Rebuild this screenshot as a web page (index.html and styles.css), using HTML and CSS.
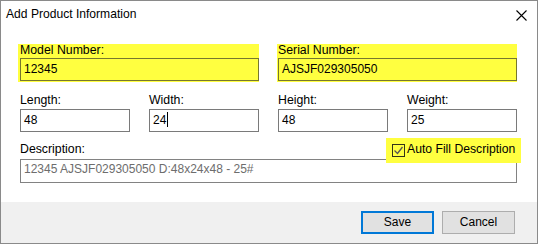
FILE: index.html
```html
<!DOCTYPE html>
<html>
<head>
<meta charset="utf-8">
<link rel="stylesheet" href="styles.css">
</head>
<body>
<div class="dialog">
  <div class="titlebar">
    <span class="title">Add Product Information</span>
    <svg class="close" width="11" height="11" viewBox="0 0 11 11"><path d="M0.5 0.5L10.5 10.5M10.5 0.5L0.5 10.5" stroke="#000" stroke-width="1.1" fill="none"/></svg>
  </div>
  <div class="content">
    <div class="row1">
      <div class="hl group model">
        <div class="label">Model Number:</div>
        <div class="input hl-input">12345</div>
      </div>
      <div class="hl group serial">
        <div class="label">Serial Number:</div>
        <div class="input hl-input">AJSJF029305050</div>
      </div>
    </div>
    <div class="row2">
      <div class="field">
        <div class="label">Length:</div>
        <div class="input">48</div>
      </div>
      <div class="field">
        <div class="label">Width:</div>
        <div class="input">24<span class="caret"></span></div>
      </div>
      <div class="field">
        <div class="label">Height:</div>
        <div class="input">48</div>
      </div>
      <div class="field">
        <div class="label">Weight:</div>
        <div class="input">25</div>
      </div>
    </div>
    <div class="row3">
      <div class="row3-head">
        <div class="label desc-label">Description:</div>
        <div class="hl autofill">
          <span class="checkbox"><svg width="11" height="11" viewBox="0 0 11 11"><path d="M1.5 5.5L4.5 8.5L9.5 2" stroke="#555" stroke-width="1.3" fill="none"/></svg></span>
          <span class="autofill-text">Auto Fill Description</span>
        </div>
      </div>
      <div class="input desc">12345 AJSJF029305050 D:48x24x48 - 25#</div>
    </div>
  </div>
  <div class="footer">
    <div class="btn default">Save</div>
    <div class="btn">Cancel</div>
  </div>
</div>
</body>
</html>
```
FILE: styles.css
```css
html, body {
  margin: 0;
  padding: 0;
  background: #fff;
}
.dialog {
  width: 538px;
  height: 244px;
  box-sizing: border-box;
  border: 1px solid #8a8a8a;
  display: flex;
  flex-direction: column;
  font-family: "Liberation Sans", Arial, sans-serif;
  font-size: 12px;
  color: #000;
  background: #fff;
}
.titlebar {
  height: 30px;
  box-sizing: border-box;
  padding: 7px 10px 0 5px;
  display: flex;
  align-items: flex-start;
  line-height: 13px;
}
.title {
  color: #000;
  font-size: 12.1px;
}
.close {
  margin-left: auto;
  margin-top: 2px;
}
.content {
  flex: 1;
  padding: 13px 0 0 17px;
}
.label {
  line-height: 13px;
  font-size: 12.3px;
  white-space: nowrap;
}
.hl {
  background: #ffff40;
}
.row1 {
  display: flex;
  gap: 18px;
}
.group {
  box-sizing: border-box;
  padding: 0 0 1px 2px;
}
.group.model {
  width: 241px;
}
.group.serial {
  width: 240px;
  padding-left: 1px;
}
.group .label {
  margin-bottom: 1px;
}
.input {
  box-sizing: border-box;
  height: 23px;
  border: 1px solid #7a7a7a;
  padding: 0 3px;
  line-height: 21px;
  white-space: nowrap;
  overflow: hidden;
  background: #fff;
}
.hl-input {
  width: 239px;
  background: transparent;
  border-color: #77772e;
}
.row2 {
  display: flex;
  gap: 19px;
  margin: 12px 0 0 2px;
}
.field {
  width: 110px;
}
.field .label {
  margin-bottom: 2px;
}
.caret {
  display: inline-block;
  width: 1px;
  height: 15px;
  background: #000;
  vertical-align: -3px;
  margin-left: 1px;
}
.row3 {
  margin: 6px 0 0 2px;
  width: 497px;
}
.row3-head {
  height: 21px;
  display: flex;
  justify-content: space-between;
  align-items: flex-start;
}
.desc-label {
  padding-top: 5px;
}
.autofill {
  position: relative;
  z-index: 1;
  width: 135px;
  height: 25px;
  box-sizing: border-box;
  margin-right: -4px;
  padding: 6px 0 0 6px;
  display: flex;
  align-items: flex-start;
  gap: 2px;
}
.checkbox {
  width: 13px;
  height: 13px;
  box-sizing: border-box;
  border: 1px solid #33331a;
  display: flex;
  align-items: center;
  justify-content: center;
}
.checkbox svg {
  display: block;
}
.autofill-text {
  line-height: 13px;
  font-size: 12.2px;
  margin-top: -1px;
  white-space: nowrap;
}
.input.desc {
  width: 497px;
  height: 24px;
  line-height: 19px;
  color: #6d6d6d;
  border-color: #828282;
}
.footer {
  height: 41px;
  box-sizing: border-box;
  background: #f0f0f0;
  display: flex;
  justify-content: flex-end;
  align-items: flex-start;
  gap: 8px;
  padding: 9px 22px 0 0;
}
.btn {
  width: 73px;
  height: 23px;
  box-sizing: border-box;
  background: #e1e1e1;
  border: 1px solid #adadad;
  text-align: center;
  line-height: 21px;
}
.btn.default {
  border: 2px solid #0078d7;
  line-height: 19px;
}
```
